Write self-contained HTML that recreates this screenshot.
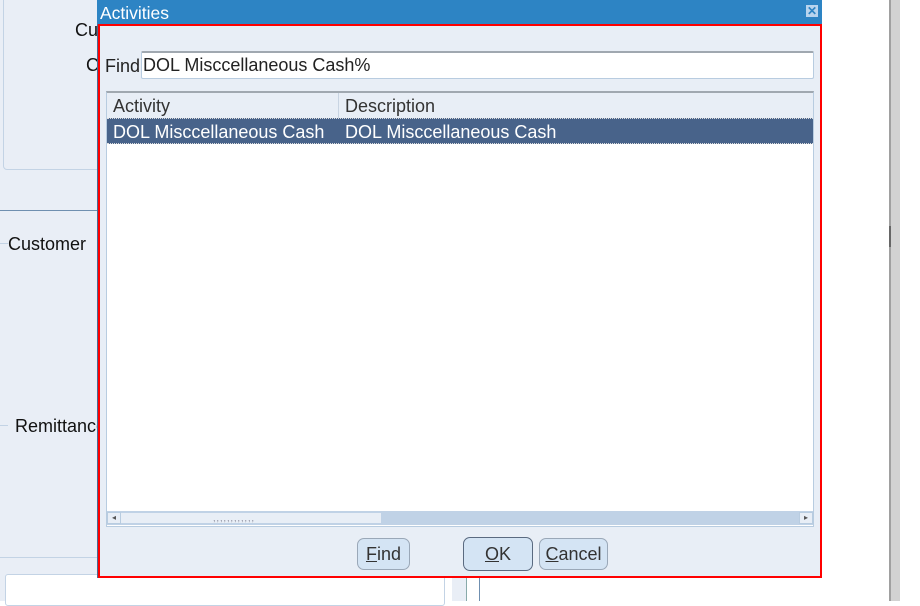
<!DOCTYPE html>
<html><head><style>
body{margin:0;width:920px;height:601px;position:relative;overflow:hidden;background:#fff;font-family:"Liberation Sans",Arial,sans-serif;}
.a{position:absolute;}
.t{font-size:18px;color:#111;}
</style></head><body>
<div class="a" style="left:0;top:0;width:98px;height:601px;background:#e9eef6"></div>
<div class="a" style="left:3px;top:-4px;width:100px;height:172px;border:1px solid #c3d3e5;border-radius:4px"></div>
<div class="a" style="left:0;top:210px;width:98px;height:1px;background:#6f8fb0"></div>
<div class="a" style="left:0;top:243px;width:8px;height:1px;background:#c3d3e5"></div>
<div class="a" style="left:0;top:425px;width:8px;height:1px;background:#c3d3e5"></div>
<div class="a" style="left:0;top:557px;width:98px;height:1px;background:#c3d3e5"></div>
<div class="a t" style="left:75px;top:20px">Cu</div>
<div class="a t" style="left:86px;top:55px">C</div>
<div class="a t" style="left:8px;top:234px">Customer</div>
<div class="a t" style="left:15px;top:416px">Remittance</div>
<div class="a" style="left:5px;top:574px;width:438px;height:30px;background:#fff;border:1px solid #c3d3e5;border-radius:3px"></div>
<div class="a" style="left:452px;top:577px;width:14px;height:24px;background:#e9eef6;border-right:1px solid #8aa"></div>
<div class="a" style="left:479px;top:577px;width:1px;height:24px;background:#6f8fb0"></div>
<div class="a" style="left:889px;top:0;width:2px;height:601px;background:#a0a0a0"></div>
<div class="a" style="left:891px;top:0;width:9px;height:601px;background:#d2d2d2"></div>
<div class="a" style="left:889px;top:226px;width:2px;height:21px;background:#666"></div>

<div class="a" style="left:97px;top:0;width:723px;height:577px;background:#e8eef6;border-right:1px solid #4a6a94;border-bottom:1px solid #4a6a94;border-left:1px solid #4a6a94"></div>
<div class="a" style="left:97px;top:0;width:725px;height:24px;background:#2d84c4"></div>
<div class="a" style="left:100px;top:3px;font-size:17.5px;color:#fff">Activities</div>
<div class="a" style="left:806px;top:5px;width:12px;height:12px;background:#b8d4ee;color:#2d84c4;font-size:12px;line-height:12px;text-align:center;font-weight:bold">✕</div>
<div class="a" style="left:98px;top:24px;width:720px;height:550px;border:2px solid #f00"></div>
<div class="a t" style="left:105px;top:56px;color:#222">Find</div>
<div class="a" style="left:141px;top:51px;width:671px;height:25px;background:#fff;border:1px solid #b8cce0;border-top:2px solid #a0a8b0;border-radius:2px"></div>
<div class="a t" style="left:143px;top:55px;color:#222">DOL Misccellaneous Cash%</div>
<div class="a" style="left:106px;top:91px;width:706px;height:433px;background:#fff;border:1px solid #b8cce0;border-top:2px solid #a0a8b0"></div>
<div class="a" style="left:107px;top:93px;width:706px;height:25px;background:#e8eef6"></div>
<div class="a" style="left:338px;top:93px;width:1px;height:25px;background:#c8d4e2"></div>
<div class="a t" style="left:113px;top:96px;color:#333">Activity</div>
<div class="a t" style="left:345px;top:96px;color:#333">Description</div>
<div class="a" style="left:107px;top:118px;width:706px;height:26px;background:#48638a;border-top:1px dotted #ddd;border-bottom:1px dotted #ddd;box-sizing:border-box"></div>
<div class="a t" style="left:113px;top:122px;color:#fff">DOL Misccellaneous Cash</div>
<div class="a t" style="left:345px;top:122px;color:#fff">DOL Misccellaneous Cash</div>
<div class="a" style="left:107px;top:511px;width:706px;height:14px;background:#c0d2e6"></div>
<div class="a" style="left:107px;top:512px;width:275px;height:12px;background:#e8eef6;border:1px solid #c0d2e6;box-sizing:border-box"></div>
<div class="a" style="left:213px;top:513px;font-size:9px;color:#889;letter-spacing:1px">,,,,,,,,,,,,</div>
<div class="a" style="left:107px;top:512px;width:14px;height:12px;background:#e8eef6;border:1px solid #b8cce0;box-sizing:border-box;font-size:8px;line-height:10px;text-align:center;color:#555">◂</div>
<div class="a" style="left:799px;top:512px;width:14px;height:12px;background:#e8eef6;border:1px solid #b8cce0;box-sizing:border-box;font-size:8px;line-height:10px;text-align:center;color:#555">▸</div>
<div class="a t" style="left:357px;top:538px;width:51px;height:30px;background:#d4e4f4;border:1px solid #9aa8b8;border-radius:7px;text-align:center;line-height:31px;color:#333"><u>F</u>ind</div>
<div class="a t" style="left:463px;top:537px;width:68px;height:32px;background:#d4e4f4;border:1px solid #5a6a80;border-radius:7px;text-align:center;line-height:33px;color:#333"><u>O</u>K</div>
<div class="a t" style="left:539px;top:538px;width:67px;height:30px;background:#d4e4f4;border:1px solid #9aa8b8;border-radius:7px;text-align:center;line-height:31px;color:#333"><u>C</u>ancel</div>
</body></html>
